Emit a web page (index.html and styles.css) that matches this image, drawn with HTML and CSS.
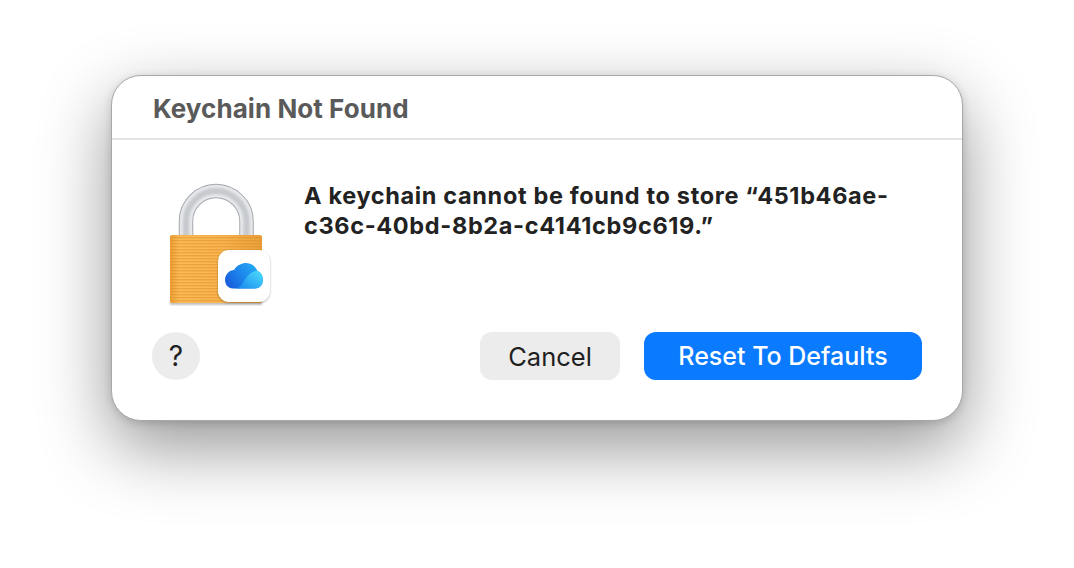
FILE: index.html
```html
<!DOCTYPE html>
<html>
<head>
    <title>Keychain Not Found</title>
    <link rel="stylesheet" href="styles.css">
</head>
<body>

    <div class="dialog">
        <div class="dialog-title">Keychain Not Found</div>

        <div class="dialog-body">
            <div class="lock-icon">
                <svg width="110" height="128" viewBox="0 0 110 128">
                    <defs>
                        <linearGradient id="brass" x1="0" y1="0" x2="1" y2="0">
                            <stop offset="0" stop-color="#ec9f34"/>
                            <stop offset="0.1" stop-color="#fbbb56"/>
                            <stop offset="0.6" stop-color="#f8b450"/>
                            <stop offset="1" stop-color="#e9a03a"/>
                        </linearGradient>
                        <pattern id="ridges" width="4" height="3" patternUnits="userSpaceOnUse">
                            <rect width="4" height="1.4" fill="#d9861f" opacity="0.42"/>
                        </pattern>
                        <linearGradient id="cloudBack" x1="0" y1="0.7" x2="1" y2="0.2">
                            <stop offset="0" stop-color="#1a5fdc"/>
                            <stop offset="0.5" stop-color="#1d8bee"/>
                            <stop offset="1" stop-color="#25b4f6"/>
                        </linearGradient>
                        <linearGradient id="cloudFront" x1="0" y1="1" x2="1" y2="0.2">
                            <stop offset="0" stop-color="#1580ec"/>
                            <stop offset="1" stop-color="#48d6fb"/>
                        </linearGradient>
                        <filter id="soft" x="-20%" y="-20%" width="140%" height="140%">
                            <feGaussianBlur stdDeviation="1.2"/>
                        </filter>
                    </defs>
                    <path d="M21 60 V41 C21 24.5 34.5 11 51 11 C67.5 11 81.5 24.5 81.5 41 V60" fill="none" stroke="#a4a8ae" stroke-width="14.5"/>
                    <path d="M21 60 V41 C21 24.5 34.5 11 51 11 C67.5 11 81.5 24.5 81.5 41 V60" fill="none" stroke="#e6e8ea" stroke-width="12.5"/>
                    <path d="M21 60 V41 C21 24.5 34.5 11 51 11 C67.5 11 81.5 24.5 81.5 41 V60" fill="none" stroke="#c6c9ce" stroke-width="6" filter="url(#soft)"/>
                    <rect x="5" y="120" width="92" height="5" fill="#000" opacity="0.25" filter="url(#soft)"/>
                    <rect x="5" y="55" width="92" height="68" rx="2" fill="url(#brass)"/>
                    <rect x="5" y="55" width="92" height="68" rx="2" fill="url(#ridges)"/>
                    <rect x="53" y="71" width="52" height="52" rx="11" fill="#000" opacity="0.28" filter="url(#soft)"/>
                    <rect x="53" y="70" width="52" height="52" rx="11" fill="#fff"/>
                    <path d="M68 108.5 C62 108.5 60 103 60 100 C60 94 65 90 69 90 C72 85 77 83 81 83 C87 83 91 87 92.5 91 C96 92 98 96 98 100 C98 105 94 108.5 90 108.5 Z" fill="url(#cloudBack)"/>
                    <path d="M69 108.5 C76 108.5 78 102 81 98 C84 94 88 91 92.5 91 C96 92 98 96 98 100 C98 105 94 108.5 90 108.5 Z" fill="url(#cloudFront)"/>
                </svg>
            </div>
            <div class="message">A keychain cannot be found to store “451b46ae-c36c-40bd-8b2a-c4141cb9c619.”</div>
        </div>

        <div class="dialog-footer">
            <button class="help-btn">?</button>
            <div class="actions">
                <button class="btn btn-cancel">Cancel</button>
                <button class="btn btn-primary">Reset To Defaults</button>
            </div>
        </div>
    </div>

</body>
</html>
```

FILE: styles.css
```css
html, body {
    height: 100%;
}

body {
    margin: 0;
    background-color: #fff;
    font-family: Inter, 'Liberation Sans', sans-serif;
    padding: 75px 111px 0;
    box-sizing: border-box;
    overflow: hidden;
}

.dialog {
    width: 852px;
    height: 346px;
    box-sizing: border-box;
    background-color: #fff;
    border-radius: 30px;
    border: 1px solid #a8a8a8;
    box-shadow: 0 26px 70px rgba(0, 0, 0, 0.42), 0 2px 8px rgba(0, 0, 0, 0.15);
    display: flex;
    flex-direction: column;
}

.dialog-title {
    height: 64px;
    box-sizing: border-box;
    padding: 17px 40px 0 41px;
    border-bottom: 2px solid #e3e3e3;
    color: #5a5a5a;
    font-size: 26px;
    line-height: 32px;
    font-weight: 700;
    letter-spacing: 0.06px;
}

.dialog-body {
    flex: 1;
    display: flex;
    padding: 40px 40px 0 53px;
}

.lock-icon {
    width: 139px;
    flex-shrink: 0;
}

.message {
    width: 590px;
    color: #222;
    font-size: 23.5px;
    line-height: 30px;
    font-weight: 700;
    letter-spacing: 0.65px;
    margin-top: 1px;
}

.dialog-footer {
    display: flex;
    justify-content: space-between;
    align-items: center;
    padding: 0 40px 40px;
}

.help-btn {
    width: 48px;
    height: 48px;
    border: none;
    border-radius: 50%;
    background-color: #ececec;
    color: #1f1f1f;
    font-family: inherit;
    font-size: 28px;
    padding: 0;
}

.actions {
    display: flex;
    gap: 24px;
}

.btn {
    height: 48px;
    border: none;
    border-radius: 12px;
    font-family: inherit;
    font-size: 25.5px;
    padding: 0;
}

.btn-cancel {
    width: 140px;
    background-color: #ececec;
    color: #1f1f1f;
}

.btn-primary {
    width: 278px;
    background-color: #0a7aff;
    color: #fff;
    font-size: 25px;
    font-weight: 500;
}
```
